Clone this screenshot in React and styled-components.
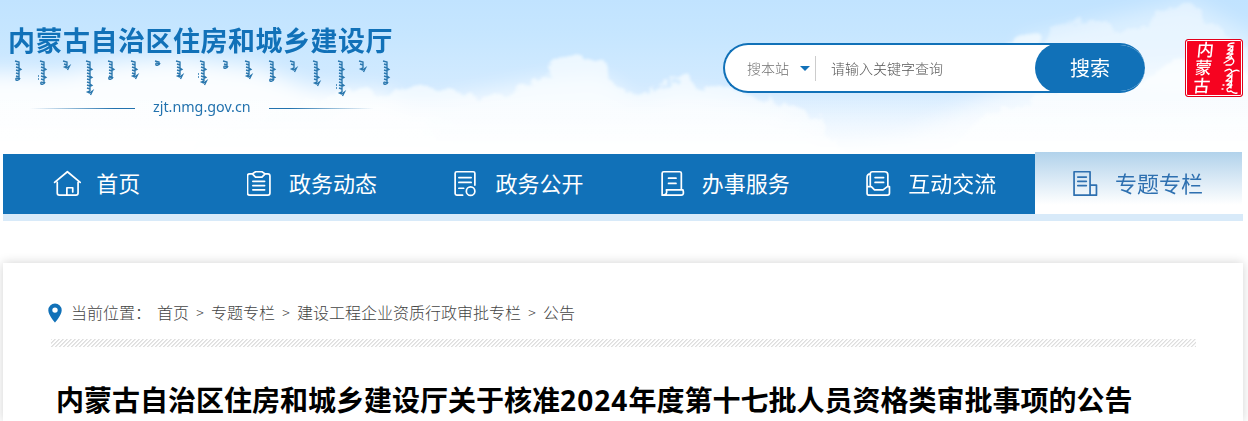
import React from 'react';
import styled, { createGlobalStyle } from 'styled-components';

const BLUE = '#1171b8';

const GlobalStyle = createGlobalStyle`
    * {
        box-sizing: border-box;
    }

    body {
        margin: 0;
        background: #fff;
        font-family: 'Noto Sans CJK SC', sans-serif;
        overflow: hidden;
    }
`;

const words = [
    { x: 18, h: 17, tail: 'round' },
    { x: 43, h: 21, tail: 'round', dots: true },
    { x: 66, h: 4, tail: 'long' },
    { x: 89, h: 29, tail: 'long' },
    { x: 111, h: 16, tail: 'round' },
    { x: 134, h: 13, tail: 'long' },
    { x: 158, h: 2, tail: 'round' },
    { x: 179, h: 13, tail: 'long' },
    { x: 203, h: 19, tail: 'long', dots: true },
    { x: 226, h: 5, tail: 'round' },
    { x: 248, h: 13, tail: 'long' },
    { x: 272, h: 18, tail: 'round' },
    { x: 293, h: 6, tail: 'long' },
    { x: 316, h: 20, tail: 'long' },
    { x: 341, h: 30, tail: 'long', dots: true },
    { x: 362, h: 6, tail: 'long' },
    { x: 386, h: 21, tail: 'round' },
];

function wordPath({ h, tail }) {
    let d = `M-3 -1L1 0V${h}`;
    for (let y = 3; y < h; y += 3) {
        d += `M1 ${y}l-3 -1`;
    }
    for (let y = 6; y < h - 3; y += 8) {
        d += `M1 ${y}l2 1.500l-2 1`;
    }
    return d + (tail === 'long' ? `M1 ${h}l-2.500 1l2 1l3 -2l-2 4` : `M1 ${h}q-4 -2 -3 1q3 1 4 -2`);
}

const icons = {
    home: 'M1.500 12.500L13.500 2.500L25.500 12.500M4 12.500V22.500q0 2 2 2H21.500q2 0 2 -2V12.500M13 24V17.500H18.500V21.500',
    clipboard: 'M9 4.500H6.500q-2 0 -2 2V22.500q0 2 2 2H23.500q2 0 2 -2V6.500q0 -2 -2 -2H21L18 2.500H12L9 4.500L12 7.500H18L21 4.500M9.500 11.500H20.500M9.500 15.500H20.500M9.500 19.500H20.500',
    record: 'M24.500 15V4q0 -1.500 -1.500 -1.500H7.500Q6 2.500 6 4V23Q6 24.500 7.500 24.500H13M9.500 8H21M9.500 12.500H21M9.500 18H14M16.500 20.700a4 4 0 1 0 8 0a4 4 0 1 0 -8 0',
    scroll: 'M6 21V4Q6 2.500 7.500 2.500H22.500Q24 2.500 24 4V19.500M12 8.500H19M12 13.500H19M6 24.500V20.500M6 24.500H24Q27 24.500 25.500 19.500H10Q11.500 24.500 6 24.500',
    tray: 'M8 15V4.500Q8 2.500 10 2.500H21.500Q24.500 2.500 24.500 5.500V16M8 4.500Q5 4.500 5 8V22.500Q5 24.500 6.500 24.500H24Q26 24.500 26 22.500V16.500H24L20 19.500H12L9 16.500H5M12.500 8H20.500M12.500 12.500H20.500',
    column: 'M5 2.500H20V24.500H5ZM8.500 7.500H16.500M8.500 11.500H16.500M8.500 15.500H16.500M20 15H26V24.500H20',
};

const menu = [
    { label: '首页', icon: 'home', first: true },
    { label: '政务动态', icon: 'clipboard' },
    { label: '政务公开', icon: 'record' },
    { label: '办事服务', icon: 'scroll' },
    { label: '互动交流', icon: 'tray' },
    { label: '专题专栏', icon: 'column', active: true },
];

const crumbs = ['首页', '专题专栏', '建设工程企业资质行政审批专栏', '公告'];

function Clouds() {
    return (
        <Sky viewBox="0 0 1248 154" preserveAspectRatio="none">
            <defs>
                <linearGradient id="sky" x1="0" y1="0" x2="0" y2="1">
                    <stop offset="0" stopColor="#c1e3ff" />
                    <stop offset="0.22" stopColor="#c6e6ff" />
                    <stop offset="0.6" stopColor="#d4ebff" />
                    <stop offset="1" stopColor="#eef7ff" />
                </linearGradient>
                <linearGradient id="fade" x1="0" y1="0" x2="0" y2="1">
                    <stop offset="0.6" stopColor="#fff" stopOpacity="0" />
                    <stop offset="1" stopColor="#fff" stopOpacity="0.85" />
                </linearGradient>
                <filter id="puff" x="-10%" y="-20%" width="120%" height="140%">
                    <feTurbulence type="fractalNoise" baseFrequency="0.06" numOctaves="4" seed="4" />
                    <feDisplacementMap in="SourceGraphic" scale="20" xChannelSelector="R" yChannelSelector="G" />
                    <feGaussianBlur stdDeviation="1.8" />
                </filter>
                <filter id="haze" x="-20%" y="-40%" width="140%" height="180%">
                    <feGaussianBlur stdDeviation="10" />
                </filter>
            </defs>
            <rect width="1248" height="154" fill="url(#sky)" />
            <g filter="url(#haze)" fill="#fff">
                <path opacity="0.9" d="M-30 72L60 74L120 62L180 58L260 68L310 88L385 92L430 120L440 170H-30Z" />
                <path opacity="0.6" d="M340 110L440 100L540 80L600 75L640 105L680 90L780 110L830 150L900 140L1000 90L1130 75L1280 60V190H340Z" />
                <path opacity="0.4" d="M1020 40L1110 18L1190 0L1260 40L1250 90L1010 90Z" />
            </g>
            <g filter="url(#puff)" fill="#fbfdff">
                <path
                    opacity="0.7"
                    d="M150 170L250 120L320 100L355 88L385 96L405 86L418 88L440 92L470 90L485 100L515 87L540 80L552 62L575 58L603 58L614 84L632 97L660 84L680 78L702 88L740 90L775 104L805 108L832 134L850 170Z"
                />
                <path opacity="0.65" d="M1008 42Q1020 30 1035 34L1050 50H1005Z" />
                <path opacity="0.4" d="M1045 42L1053 26L1073 18L1100 22L1115 32L1150 26L1160 12L1190 4L1215 26L1248 52V84H1045Z" />
                <path opacity="0.75" d="M930 170L980 118L1050 92L1145 80L1160 64L1190 64L1275 80V170Z" />
            </g>
            <rect width="1248" height="154" fill="url(#fade)" />
        </Sky>
    );
}

function Logo() {
    return (
        <Brand>
            <BrandName>内蒙古自治区住房和城乡建设厅</BrandName>
            <Ornament viewBox="0 0 400 38">
                {words.map((word) => (
                    <g key={word.x} transform={`translate(${word.x} 3)`}>
                        <path d={wordPath(word)} />
                        {word.dots && <path d={`M-5 ${word.h - 7}h1M-5 ${word.h - 4}h1`} />}
                    </g>
                ))}
            </Ornament>
            <Domain>
                <Rule $to="left" />
                zjt.nmg.gov.cn
                <Rule $to="right" />
            </Domain>
        </Brand>
    );
}

function SealStamp() {
    return (
        <Seal>
            <SealText>
                <span>内</span>
                <span>蒙</span>
                <span>古</span>
            </SealText>
            <SealScript viewBox="0 0 26 56">
                <path d="M18 3Q12 3 12 6L17 6L12 10L17 10L11 14L17 14L10 18L16 18L8 23M16 18Q20 22 15 25L10 25M17 6L15 19" />
                <path d="M9 31Q15 27 16 32Q20 29 23 31M16 32L11 36L16 36L10 41L16 41L11 45L16 45L11 49Q11 53 15 51Q18 54 21 53M16 34L15 48M7 45l1 0M6 49l1 0" />
            </SealScript>
        </Seal>
    );
}

function App() {
    return (
        <>
            <GlobalStyle />
            <Header>
                <Clouds />
                <Logo />
                <SearchBox>
                    <Scope>
                        搜本站
                        <Caret />
                    </Scope>
                    <Keyword>请输入关键字查询</Keyword>
                    <SearchButton>搜索</SearchButton>
                </SearchBox>
                <SealStamp />
            </Header>
            <Nav>
                {menu.map(({ label, icon, active, first }) => (
                    <NavItem key={label} $active={active} $first={first}>
                        <NavIcon viewBox={first ? '0 0 30 28' : '4 0 30 28'} $first={first}>
                            <path d={icons[icon]} />
                        </NavIcon>
                        {label}
                    </NavItem>
                ))}
            </Nav>
            <Card>
                <Breadcrumb>
                    <Pin viewBox="0 0 14 20">
                        <path d="M7 0.500A6.700 6.700 0 0 0 0.300 7.200C0.300 12 7 19.500 7 19.500S13.700 12 13.700 7.200A6.700 6.700 0 0 0 7 0.500ZM7 4.400A2.700 2.700 0 1 1 7 9.800A2.700 2.700 0 0 1 7 4.400Z" />
                    </Pin>
                    <Here>当前位置：</Here>
                    {crumbs.map((crumb, i) => (
                        <React.Fragment key={crumb}>
                            {i > 0 && <Arrow>&gt;</Arrow>}
                            <span>{crumb}</span>
                        </React.Fragment>
                    ))}
                </Breadcrumb>
                <Stripes />
                <Title>
                    内蒙古自治区住房和城乡建设厅关于核准<Year>2024</Year>年度第十七批人员资格类审批事项的公告
                </Title>
            </Card>
        </>
    );
}

const Header = styled.header`
    position: relative;
    z-index: 0;
    display: flex;
    align-items: flex-start;
    height: 154px;
`;

const Sky = styled.svg`
    position: absolute;
    inset: 0;
    z-index: -1;
    width: 100%;
    height: 100%;
`;

const Brand = styled.div`
    width: 400px;
    padding-top: 21px;
`;

const BrandName = styled.div`
    padding-left: 8px;
    height: 38px;
    color: ${BLUE};
    font-size: 27px;
    font-weight: 700;
    line-height: 37px;
    letter-spacing: 0.5px;
    white-space: nowrap;
`;

const Ornament = styled.svg`
    display: block;
    width: 400px;
    height: 38px;
    fill: none;
    stroke: #2a77ae;
    stroke-width: 1.35;
`;

const Domain = styled.div`
    display: flex;
    align-items: center;
    gap: 18px;
    height: 20px;
    padding-left: 30px;
    color: #2272ae;
    font-family: 'Noto Sans', sans-serif;
    font-size: 14.3px;
    line-height: 20px;
`;

const Rule = styled.div`
    width: 105px;
    height: 1px;
    margin-top: 2px;
    background: linear-gradient(to ${(props) => props.$to}, #2272ae 20%, rgba(34, 114, 174, 0));
`;

const SearchBox = styled.div`
    display: flex;
    width: 422px;
    height: 50px;
    margin: 43px 0 0 323px;
    border: 2px solid ${BLUE};
    border-right: 0;
    border-radius: 25px;
    background: #fff;
    overflow: hidden;
`;

const Scope = styled.div`
    display: flex;
    align-items: center;
    justify-content: space-between;
    width: 91px;
    height: 25px;
    margin-top: 11px;
    padding: 0 5px 2px 22px;
    border-right: 1px solid #ccc;
    color: #707070;
    font-size: 14px;
    font-weight: 300;
`;

const Caret = styled.i`
    margin-top: 2px;
    border: 5px solid transparent;
    border-top-color: ${BLUE};
    border-bottom: 0;
`;

const Keyword = styled.div`
    flex: 1;
    padding-left: 15px;
    color: #555;
    font-size: 14px;
    font-weight: 300;
    line-height: 46px;
`;

const SearchButton = styled.button`
    width: 110px;
    height: 50px;
    margin-top: -2px;
    padding: 0 0 1px;
    border: 0;
    border-radius: 25px;
    background: ${BLUE};
    color: #fff;
    font-family: inherit;
    font-size: 20px;
    line-height: 48px;
`;

const Seal = styled.div`
    display: flex;
    width: 58px;
    height: 58px;
    margin: 39px 0 0 40px;
    border: 1px solid #e2001b;
    border-radius: 3px;
    background: #f60320;
    box-shadow: inset 0 0 0 1px #fff;
`;

const SealText = styled.div`
    display: flex;
    flex-direction: column;
    width: 30px;
    padding: 0 0 0 9px;
    color: #fff;
    font-size: 17px;
    font-weight: 500;
    line-height: 18px;
    transform: skewX(-6deg);
`;

const SealScript = styled.svg`
    width: 26px;
    height: 56px;
    fill: none;
    stroke: #fff;
    stroke-width: 1.4;
    stroke-linecap: round;
    stroke-linejoin: round;
`;

const Nav = styled.nav`
    display: flex;
    align-items: flex-end;
    width: 1240px;
    height: 67px;
    margin-left: 3px;
    border-bottom: 7px solid #d8eaf9;
    background: linear-gradient(${BLUE}, ${BLUE}) 0 0 / 1032px 60px no-repeat;
`;

const NavItem = styled.a`
    position: relative;
    display: flex;
    flex: none;
    align-items: center;
    justify-content: center;
    gap: 10px;
    width: ${(props) => (props.$active ? 207 : 206.4)}px;
    height: ${(props) => (props.$active ? 62 : 60)}px;
    padding: ${(props) => (props.$active ? 2 : 0)}px ${(props) => (props.$first ? 19 : 1)}px 4px 0;
    background: ${(props) => (props.$active ? 'linear-gradient(#b1d2eb, #fff 85%)' : 'none')};
    color: ${(props) => (props.$active ? '#2e70b0' : '#fff')};
    font-size: 22px;
    line-height: 30px;
`;

const NavIcon = styled.svg`
    width: 32px;
    height: 30px;
    margin-top: 4px;
    margin-right: ${(props) => (props.$first ? 1 : 0)}px;
    fill: none;
    stroke: currentColor;
    stroke-width: 1.6;
    stroke-linejoin: round;
    stroke-linecap: round;
`;

const Card = styled.main`
    width: 1240px;
    height: 158px;
    margin: 42px 0 0 3px;
    padding: 39px 47px 0 45px;
    background: #fff;
    box-shadow: 0 0 10px rgba(0, 0, 0, 0.18);
`;

const Breadcrumb = styled.div`
    display: flex;
    align-items: center;
    height: 20px;
    color: #444;
    font-size: 16px;
    font-weight: 300;
    line-height: 20px;
`;

const Pin = styled.svg`
    width: 14px;
    height: 20px;
    margin: 2px 9px 0 0;
    fill: ${BLUE};
    fill-rule: evenodd;
`;

const Here = styled.span`
    width: 86px;
`;

const Arrow = styled.span`
    width: 22px;
    font-size: 14px;
    text-align: center;
`;

const Stripes = styled.div`
    height: 8px;
    margin: 17px 0 0 3px;
    background: repeating-linear-gradient(135deg, #dedede 0 0.5px, #fff 1.2px 2.2px, #dedede 2.828px);
`;

const Title = styled.h1`
    margin: 31px 0 0 8px;
    color: #000;
    font-size: 28px;
    font-weight: 700;
    line-height: 42px;
    white-space: nowrap;
`;

const Year = styled.span`
    font-family: 'Noto Sans', sans-serif;
    font-size: 28px;
    letter-spacing: 1.1px;
`;

export default App;
